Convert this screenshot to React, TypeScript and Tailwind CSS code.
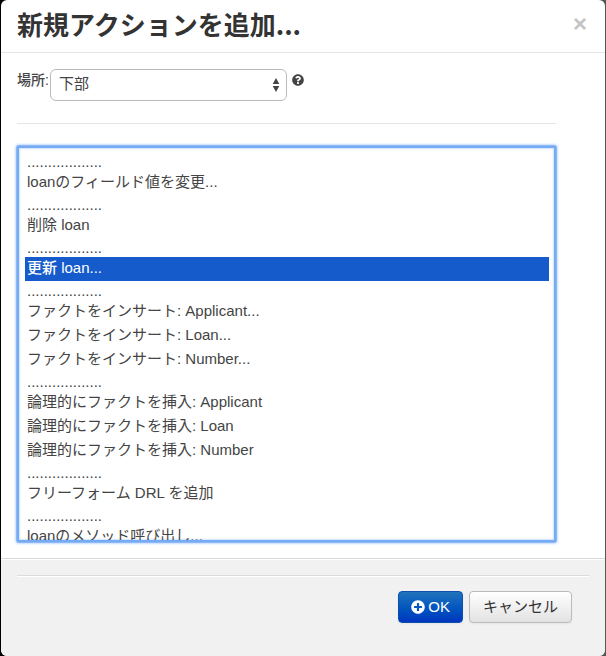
import { FaPlusCircle, FaQuestionCircle } from "react-icons/fa";

const SEPARATOR = "..................";

const actions = [
  SEPARATOR,
  "loanのフィールド値を変更...",
  SEPARATOR,
  "削除 loan",
  SEPARATOR,
  "更新 loan...",
  SEPARATOR,
  "ファクトをインサート: Applicant...",
  "ファクトをインサート: Loan...",
  "ファクトをインサート: Number...",
  SEPARATOR,
  "論理的にファクトを挿入: Applicant",
  "論理的にファクトを挿入: Loan",
  "論理的にファクトを挿入: Number",
  SEPARATOR,
  "フリーフォーム DRL を追加",
  SEPARATOR,
  "loanのメソッド呼び出し...",
];

function Header() {
  return (
    <header className="flex items-center justify-between border-b border-[#e5e5e5] pt-1 pr-[18px] pb-2 pl-4">
      <h3 className="font-['Noto_Sans_CJK_JP',sans-serif] text-[26px] leading-10 font-bold text-[#333]">
        新規アクションを追加...
      </h3>
      <button
        type="button"
        aria-label="閉じる"
        className="text-2xl leading-6 font-bold text-[#c4c4c4]"
      >
        ×
      </button>
    </header>
  );
}

function PositionField() {
  return (
    <div className="flex items-start">
      <label htmlFor="position" className="pt-px pr-px text-sm leading-5 font-medium text-[#444]">
        場所:
      </label>
      <div className="relative w-[237px]">
        <select
          id="position"
          defaultValue="bottom"
          className="h-8 w-full appearance-none rounded-md border border-[#bbb] bg-white px-2 pb-0.5 text-[15px] leading-5 text-[#444]"
        >
          <option value="bottom">下部</option>
        </select>
        <svg
          viewBox="0 0 8 14"
          aria-hidden="true"
          className="pointer-events-none absolute top-[9px] right-[7px] h-3.5 w-2 fill-[#444]"
        >
          <path d="M4 0 7.300 6H.7zM4 14 7.300 8H.7z" />
        </svg>
      </div>
      <FaQuestionCircle className="mt-[5px] ml-[5px] size-3 text-[#444]" />
    </div>
  );
}

function ActionList() {
  return (
    <select
      size={18}
      defaultValue="5"
      aria-label="アクション"
      className="block h-[396px] w-full overflow-hidden rounded-xs border-2 border-[#75abf2] bg-white py-1 pr-[5px] pl-1.5 text-[15px] text-[#444] shadow-[0_0_0_1px_#8dbaf6,0_0_2px_2px_#c6ddfb,inset_0_0_2px_1px_#cfe2fb] outline-none"
    >
      {actions.map((label, index) => (
        <option
          key={index}
          value={String(index)}
          className={`${
            label === SEPARATOR ? "h-[19px] pb-0" : "h-6 pb-1.5"
          } flex min-h-0 items-center px-0.5 pt-0 checked:bg-[#155bcc] checked:bg-linear-to-r checked:from-[#155bcc] checked:to-[#155bcc] checked:font-medium checked:text-white`}
        >
          {label}
        </option>
      ))}
    </select>
  );
}

function Footer() {
  return (
    <footer className="grow border-t border-[#d8d8d8] bg-[#f1f1f1] px-4 pt-4 shadow-[inset_0_1px_0_#fff]">
      <hr className="border-t border-b border-t-[#dcdcdc] border-b-white" />
      <div className="mt-3.5 flex justify-end gap-1.5 pr-[17px]">
        <button
          type="button"
          className="flex h-8 items-center gap-[3px] rounded border border-[#0e4fae] bg-linear-to-b from-[#2173bb] to-[#0035c0] px-3 text-[15px] leading-5 text-white shadow-xs"
        >
          <FaPlusCircle className="size-3.5" />
          OK
        </button>
        <button
          type="button"
          className="h-8 rounded border border-[#bbb] bg-linear-to-b from-white to-[#e2e2e2] px-[13px] text-[15px] leading-5 text-[#333] shadow-xs"
        >
          キャンセル
        </button>
      </div>
    </footer>
  );
}

export default function App() {
  return (
    <div className="flex min-h-screen flex-col bg-linear-to-r from-black to-[#555] px-px font-['Liberation_Sans','Noto_Sans_CJK_JP',sans-serif] text-[#333]">
      <div
        role="dialog"
        aria-label="新規アクションを追加"
        className="flex grow flex-col overflow-hidden rounded-md bg-white"
      >
        <Header />
        <form className="pt-4 pr-[49px] pb-4 pl-4">
          <PositionField />
          <hr className="mt-[22px] mb-[22px] border-[#e5e5e5]" />
          <ActionList />
        </form>
        <Footer />
      </div>
    </div>
  );
}
